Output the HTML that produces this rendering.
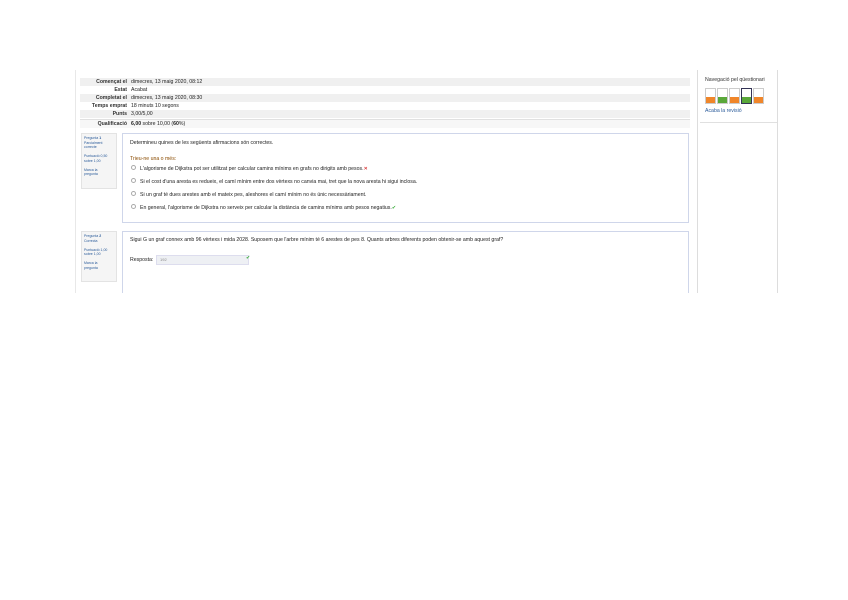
<!DOCTYPE html>
<html><head><meta charset="utf-8"><style>
body{margin:0;width:848px;height:600px;background:#fff;font-family:"Liberation Sans",sans-serif;position:relative;overflow:hidden;font-size:5.2px;color:#222}
.a{position:absolute}
.row{position:absolute;left:80px;width:610px;height:8px;line-height:8px}
.row b{position:absolute;right:563px;font-weight:bold;color:#333;white-space:nowrap}
.row span{position:absolute;left:51px;white-space:nowrap}
.info{position:absolute;left:81px;width:30px;background:#f5f5f5;border:1px solid #e3e3e3;font-size:3.5px;line-height:4.5px;color:#2a5b9a;padding:2px}
.box{position:absolute;left:122px;width:565px;border:1px solid #cfd6ea;background:#fff}
.opt{position:absolute;left:8px;white-space:nowrap}
.opt i{display:inline-block;width:3px;height:3px;border:1px solid #aaa;border-radius:50%;margin-right:4px}
.nb{position:absolute;top:88px;width:9px;height:14px;border:1px solid #ccc;background:#fff}
.nb div{position:absolute;bottom:0;left:0;right:0;height:6px}
#clip{position:absolute;left:0;top:0;width:848px;height:293px;overflow:hidden}
</style></head><body><div id="clip">
<div class="a" style="left:75px;top:70px;width:1px;height:223px;background:#e8e8e8"></div>
<div class="a" style="left:697px;top:70px;width:1px;height:223px;background:#ddd"></div>
<div class="a" style="left:777px;top:70px;width:1px;height:223px;background:#ddd"></div>
<div class="row" style="top:78px;background:#f0f0f0"><b>Començat el</b><span>dimecres, 13 maig 2020, 08:12</span></div>
<div class="row" style="top:86px"><b>Estat</b><span>Acabat</span></div>
<div class="row" style="top:94px;background:#f0f0f0"><b>Completat el</b><span>dimecres, 13 maig 2020, 08:30</span></div>
<div class="row" style="top:102px"><b>Temps emprat</b><span>18 minuts 10 segons</span></div>
<div class="row" style="top:110px;background:#f0f0f0"><b>Punts</b><span>3,00/5,00</span></div>
<div class="row" style="top:119px;border-top:1px solid #e0e0e0;background:#f7f7f7"><b>Qualificació</b><span><b style="position:static;color:#222">6,00</b> sobre 10,00 (<b style="position:static;color:#222">60</b>%)</span></div>
<div class="info" style="top:133px;height:50px">Pregunta <b>1</b><br>Parcialment<br>correcte<br><br>Puntuació 0,50<br>sobre 1,00<br><br>Marca la<br>pregunta</div>
<div class="box" style="top:133px;height:88px">
<div class="a" style="left:7px;top:6px">Determineu quines de les següents afirmacions són correctes.</div>
<div class="a" style="left:7px;top:22px;color:#8a4b00">Trieu-ne una o més:</div>
<div class="opt" style="top:31px"><i></i>L'algorisme de Dijkstra pot ser utilitzat per calcular camins mínims en grafs no dirigits amb pesos.<span style="color:#c00">✕</span></div>
<div class="opt" style="top:44px"><i></i>Si el cost d'una aresta es redueix, el camí mínim entre dos vèrtexs no canvia mai, tret que la nova aresta hi sigui inclosa.</div>
<div class="opt" style="top:57px"><i></i>Si un graf té dues arestes amb el mateix pes, aleshores el camí mínim no és únic necessàriament.</div>
<div class="opt" style="top:70px"><i></i>En general, l'algorisme de Dijkstra no serveix per calcular la distància de camins mínims amb pesos negatius.<span style="color:#3a3">✔</span></div>
</div>
<div class="info" style="top:231px;height:45px">Pregunta <b>2</b><br>Correcta<br><br>Puntuació 1,00<br>sobre 1,00<br><br>Marca la<br>pregunta</div>
<div class="box" style="top:231px;height:70px;border-bottom:none">
<div class="a" style="left:7px;top:5px;white-space:nowrap">Sigui G un graf connex amb 96 vèrtexs i mida 2028. Suposem que l'arbre mínim té 6 arestes de pes 8. Quants arbres diferents poden obtenir-se amb aquest graf?</div>
<div class="a" style="left:7px;top:25px">Resposta:</div>
<div class="a" style="left:33px;top:23px;width:88px;height:8px;background:#eef0f4;border:1px solid #dde;font-size:4px;line-height:8px;padding-left:3px;color:#888">192</div>
<div class="a" style="left:123px;top:23px;color:#3a3">✔</div>
</div>
<div class="a" style="left:705px;top:77px;color:#333">Navegació pel qüestionari</div>
<div class="nb" style="left:705px"><div style="background:#f0862a"></div></div>
<div class="nb" style="left:717px"><div style="background:#5aa83a"></div></div>
<div class="nb" style="left:729px"><div style="background:#f0862a"></div></div>
<div class="nb" style="left:741px;border-color:#335"><div style="background:#5aa83a"></div></div>
<div class="nb" style="left:753px"><div style="background:#f0862a"></div></div>
<div class="a" style="left:705px;top:108px;color:#2a5b9a">Acaba la revisió</div>
<div class="a" style="left:700px;top:122px;width:77px;height:1px;background:#e0e0e0"></div>
</div></body></html>
